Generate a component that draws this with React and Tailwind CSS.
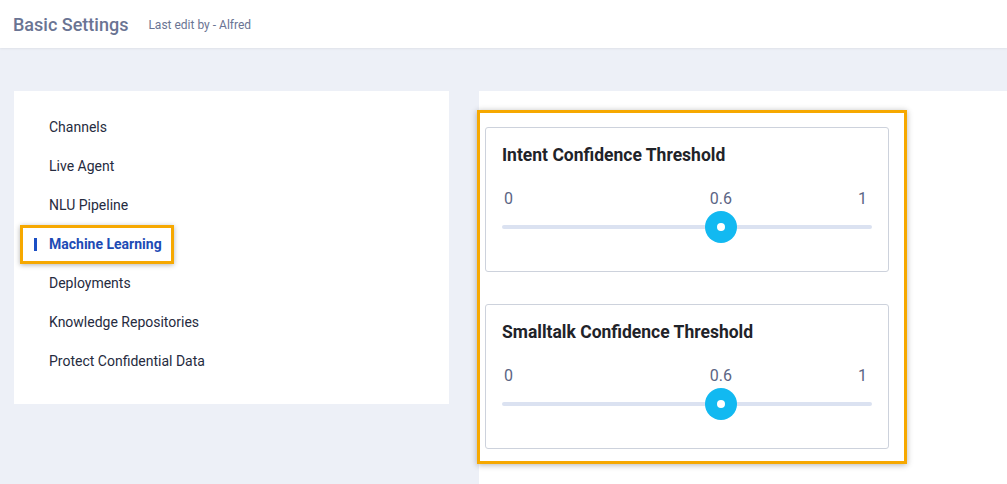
import React from "react";

const navItems = [
  "Channels",
  "Live Agent",
  "NLU Pipeline",
  "Machine Learning",
  "Deployments",
  "Knowledge Repositories",
  "Protect Confidential Data",
];

function ThresholdCard({ title, value }) {
  // thumb center follows a native range: left + r + value * (width - 2r)
  const thumbLeft = 16 + value * (370 - 32);
  return (
    <div className="h-[145px] shrink-0 rounded-[3px] border border-[#cdd2dc] bg-white px-4 pt-[15px]">
      <div className="h-6 text-[17.5px] font-bold leading-6 text-[#1f2329]">{title}</div>
      <div className="relative mt-[22px] flex h-5 items-center justify-between pl-[2px] pr-[5px] text-[16px] leading-5 text-[#5b6584]">
        <span>0</span>
        <span
          className="absolute top-0 -translate-x-1/2"
          style={{ left: thumbLeft }}
        >
          {value}
        </span>
        <span>1</span>
      </div>
      <div className="relative mt-[2px] flex h-8 w-[370px] items-center">
        <div className="h-[4px] w-full rounded-full bg-[#dbe2f1]" />
        <div
          className="absolute top-0 flex h-8 w-8 -translate-x-1/2 items-center justify-center rounded-full bg-[#12b9f1]"
          style={{ left: thumbLeft }}
        >
          <div className="h-2 w-2 rounded-full bg-white" />
        </div>
      </div>
    </div>
  );
}

export default function App() {
  return (
    <div
      className="flex h-[484px] w-[1007px] flex-col overflow-hidden bg-[#edf0f7]"
      style={{ fontFamily: "Roboto, 'Liberation Sans', sans-serif" }}
    >
      {/* Header */}
      <header className="flex h-12 shrink-0 items-center bg-white pl-[13px] shadow-[0_1px_2px_rgba(0,0,0,0.06)]">
        <h1 className="text-[18px] font-medium text-[#6a7493]">Basic Settings</h1>
        <span className="ml-[20px] mt-[2px] text-[12px] text-[#6a7493]">Last edit by - Alfred</span>
      </header>

      <div className="mt-[43px] flex flex-1 gap-[30px] pl-[14px]">
        {/* Left – settings nav */}
        <nav className="h-[313px] w-[435px] shrink-0 bg-white pb-[23px] pt-[17px]">
          {navItems.map((item) =>
            item === "Machine Learning" ? (
              <div
                key={item}
                className="ml-[6px] flex h-[39px] w-[154px] items-center border-[3px] border-[#f6a800] pl-[11px] shadow-[0_1px_5px_rgba(0,0,0,0.3)]"
              >
                <span className="h-[13px] w-[3px] bg-[#1b4fc4]" />
                <span className="ml-3 text-[14px] font-bold text-[#1d4bb5]">{item}</span>
              </div>
            ) : (
              <div key={item} className="flex h-[39px] items-center pl-[35px] text-[14px] text-[#262b40]">
                {item}
              </div>
            )
          )}
        </nav>

        {/* Right – thresholds */}
        <section className="flex-1 bg-white pt-[19px]">
          <div className="-ml-[2px] flex h-[354px] w-[430px] flex-col gap-[32px] border-[3px] border-[#f6a800] pb-[12px] pl-[5px] pr-[15px] pt-[14px] shadow-[0_1px_6px_rgba(0,0,0,0.3)]">
            <ThresholdCard title="Intent Confidence Threshold" value={0.6} />
            <ThresholdCard title="Smalltalk Confidence Threshold" value={0.6} />
          </div>
        </section>
      </div>
    </div>
  );
}
